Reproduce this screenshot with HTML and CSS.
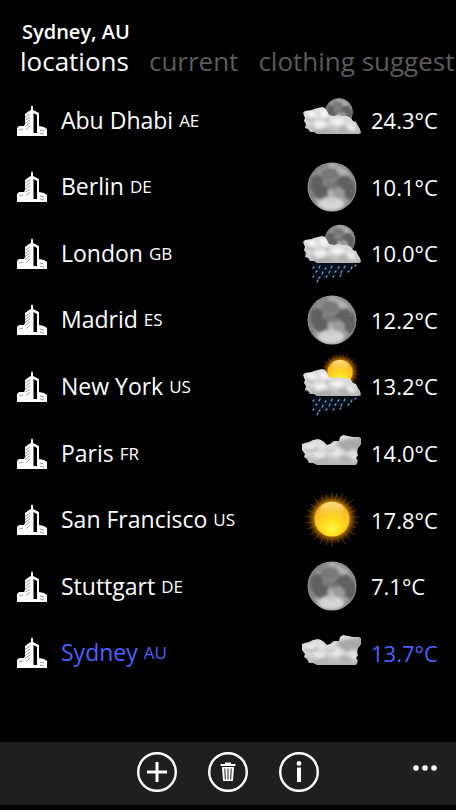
FILE: index.html
```html
<!DOCTYPE html>
<html lang="en">
<head>
<meta charset="utf-8">
<meta name="viewport" content="width=device-width, initial-scale=1">
<title>Weather locations</title>
<link rel="stylesheet" href="styles.css">
</head>
<body>
<svg class="defs" width="0" height="0" aria-hidden="true">
  <defs>
    <radialGradient id="moon-fill" cx=".52" cy=".5" r=".5">
      <stop offset="0" stop-color="#9a9a9a"/><stop offset=".8" stop-color="#9c9c9c"/><stop offset="1" stop-color="#7c7c7c"/>
    </radialGradient>
    <radialGradient id="sun-fill" cx=".5" cy=".78" r=".75">
      <stop offset="0" stop-color="#fff648"/><stop offset=".35" stop-color="#ffdc1c"/><stop offset=".75" stop-color="#f9bd28"/><stop offset="1" stop-color="#eda020"/>
    </radialGradient>
    <radialGradient id="sun-glow">
      <stop offset=".6" stop-color="#e39a10"/><stop offset=".78" stop-color="#8a5200" stop-opacity=".75"/><stop offset="1" stop-color="#402000" stop-opacity="0"/>
    </radialGradient>
    <linearGradient id="sun-shine" x1="0" y1="0" x2="0" y2="1">
      <stop offset="0" stop-color="#fff0b0" stop-opacity=".8"/><stop offset="1" stop-color="#ffd850" stop-opacity="0"/>
    </linearGradient>
    <linearGradient id="cloud-fill" x1="0" y1="0" x2="0" y2="1">
      <stop offset="0" stop-color="#dcdcdc"/><stop offset=".6" stop-color="#d8d8d8"/><stop offset="1" stop-color="#b4b4b4"/>
    </linearGradient>
    <filter id="soft" x="-30%" y="-30%" width="160%" height="160%"><feGaussianBlur stdDeviation="1.6"/></filter>
    <clipPath id="disc"><circle cx="32" cy="32" r="24.5"/></clipPath>
    <path id="cloud-shape" d="M3 21l2-2 7-1 2-1 4-1 4-1 3 1 2 3 2 4 5 1 4-1 4 1 5 0 4 2 2 3 3 1 2 4 2 3 1 4-2 1H17l-3-2-4 0-2-3-3-1 1-4-2-3 1-3z"/>
    <clipPath id="cloud-clip"><use href="#cloud-shape"/></clipPath>
    <path id="wide-shape" d="M2 23l3-1 4-1 4-2 5-1 3 1 3 2 3 3 3-1 4-3 5 0 1-4 3-2 5 1 5 1 5 0 3 1 0 6-3 4-1 4 1 3-2 3 2 3-2 4H17l-4-2-4 0-2-4-3-2 1-3-3-4z"/>
    <clipPath id="wide-clip"><use href="#wide-shape"/></clipPath>
  </defs>

  <symbol id="city" viewBox="0 0 30 31">
    <path fill="#fff" d="M0 31V23l2-2h5l1-2V9l4-3 2-1V2l1-2 1 2v3l6 3v13l5 1 3 2v7z"/>
    <path fill="#000" d="M16.500 8l3.500 2v18h-3.500z"/>
    <path stroke="#8a8a8a" stroke-width=".9" fill="none" d="M8 12.500l5-3.500M8 15.500l5-3.500M8 18.500l5-3.500M8 21.500l5-3.500M9 24.500l4-3.500M2 25l4-1M23 25l4 1M23 28l4 1"/>
  </symbol>

  <symbol id="moon" viewBox="0 0 64 64">
    <circle cx="32" cy="32" r="24.500" fill="url(#moon-fill)"/>
    <g clip-path="url(#disc)">
      <g filter="url(#soft)">
        <path fill="#4c4c4c" opacity=".75" d="M11 23l7-4 5 5 0 6 5 3 1 8-7 5-8-5-4-9zM40 22l7-2 7 7 2 11-5 8-6-4 0-6-6-5-5-3z"/>
        <path fill="#606060" opacity=".6" d="M20 16l8-4 9 3 3 7-8 4-10-2zM24 25l8 2 7-2 4 5-8 4-10-1z"/>
        <ellipse cx="31" cy="49" rx="13" ry="7" fill="#e4e4e4" opacity=".8"/>
        <path fill="#c4c4c4" opacity=".6" d="M28 35l5 2 3 9-9 1zM36 10l9 5 4 5-9-1zM14 43l6 4-2 5zM28 8l9 0 0 4-9 0z"/>
      </g>
      <path stroke="#bbb" stroke-width=".7" opacity=".35" d="M31 48l-7-8M31 48l10-7M30 46l0-9M48 29l3-2M50 35l2 2"/>
      <circle cx="32" cy="32" r="24" fill="none" stroke="#b0b0b0" opacity=".4"/>
    </g>
  </symbol>

  <symbol id="sun" viewBox="0 0 64 64">
    <circle cx="32" cy="31" r="26" fill="url(#sun-glow)"/>
    <path stroke="#a86c0a" stroke-width=".7" opacity=".65" d="M32 13V4M35 13l2-8M39 14l4-9M42 16l5-7M45 18l9-7M48 21l7-3M49 25l8-3M50 29l9 0M50 33l9 2M49 37l7 3M47 41l8 6M44 44l6 8M41 47l4 9M37 49l2 6M32 49v10M28 49l-2 8M24 47l-4 9M20 45l-6 7M17 42l-7 5M15 38l-8 3M14 34l-9 1M14 29l-9-1M15 25l-8-3M17 21l-7-5M20 18l-5-8M24 15l-3-8M28 13l-2-7"/>
    <circle cx="32" cy="31" r="17.500" fill="url(#sun-fill)"/>
    <ellipse cx="32" cy="22" rx="12" ry="8" fill="url(#sun-shine)"/>
  </symbol>

  <symbol id="cloud" viewBox="0 0 64 64">
    <use href="#cloud-shape" fill="url(#cloud-fill)"/>
    <g clip-path="url(#cloud-clip)"><g filter="url(#soft)">
      <path fill="#fff" opacity=".7" d="M5 20l8-1 5 4-6 3zM18 18l8 0 3 6-6 2zM30 29l9-3 6 4-8 4zM14 31l10-2 3 5-10 3zM48 31l6 3 1 5-8-2z"/>
      <path fill="#999" opacity=".5" d="M5 25l6 2 4-2-2 5-7-2zM24 26l6 1-3 4zM10 36l9 2 9-2 6 4-15 2zM38 36l8-2 4 5-9 1z"/>
    </g></g>
  </symbol>

  <symbol id="wide-cloud" viewBox="0 0 64 64">
    <use href="#wide-shape" fill="url(#cloud-fill)"/>
    <g clip-path="url(#wide-clip)"><g filter="url(#soft)">
      <path fill="#808080" opacity=".55" d="M36 21l12-3 15-2-2 14-9-2-5 3-8-5z"/>
      <path fill="#999" opacity=".45" d="M4 28l6 1 5-3 5 2-6 3-8 0zM24 26l5 3 7-1-5 5zM9 37l9 2 8-3 5 4-12 2zM37 36l8-2 9 6-10 2z"/>
      <path fill="#f5f5f5" opacity=".65" d="M5 25l9-3 4 3-7 3zM19 21l7 4-5 3zM29 32l8-3 6 4-7 3zM13 32l10 0 2 4-9 1zM50 33l7 1-2 6z"/>
    </g></g>
  </symbol>

  <symbol id="rain" viewBox="0 0 64 64">
    <path fill="#0a1a36" opacity=".6" filter="url(#soft)" d="M11 41h45l-3 7-10 4-14 4-13 4-3-8z"/>
    <path stroke="#86a0c4" stroke-width="1.200" stroke-linecap="round" d="M14 46l-1 1M20 45l-1 2M26 47l-1 1M32 45l-1 2M39 46l-1 1M45 45l-1 2M52 46l-1 2M56 44l-1 1M17 50l-1 1M23 51l-1 2M30 50l-1 2M36 50l-1 1M42 50l-1 2M49 50l-1 1M14 55l-1 1M20 56l-1 1M27 55l-1 1M34 55l-1 1M41 54l-1 1M18 59l-1 2"/>
  </symbol>

  <symbol id="cloudy-night" viewBox="0 0 64 64">
    <use href="#moon" x="21" y="6" width="36" height="36"/>
    <use href="#cloud" y="4" width="64" height="64"/>
  </symbol>
  <symbol id="rainy-night" viewBox="0 0 64 64">
    <use href="#moon" x="20" y="-1" width="40" height="40"/>
    <use href="#rain" width="64" height="64"/>
    <use href="#cloud" width="64" height="64"/>
  </symbol>
  <symbol id="rainy-day" viewBox="0 0 64 64">
    <use href="#sun" x="17" y="-4" width="46" height="46"/>
    <use href="#rain" width="64" height="64"/>
    <use href="#cloud" width="64" height="64"/>
  </symbol>
</svg>

<div class="app">
  <header class="header">
    <h1 class="title">Sydney, AU</h1>
    <nav class="tabs">
      <button class="tab tab-active" type="button">locations</button>
      <button class="tab" type="button">current</button>
      <button class="tab" type="button">clothing suggestions</button>
    </nav>
  </header>

  <main class="main">
    <ul class="list">
      <li class="row"><svg class="city"><use href="#city"/></svg><span class="place">Abu Dhabi <small class="code">AE</small></span><svg class="sky"><use href="#cloudy-night"/></svg><span class="temp">24.3°C</span></li>
      <li class="row"><svg class="city"><use href="#city"/></svg><span class="place">Berlin <small class="code">DE</small></span><svg class="sky"><use href="#moon"/></svg><span class="temp">10.1°C</span></li>
      <li class="row"><svg class="city"><use href="#city"/></svg><span class="place">London <small class="code">GB</small></span><svg class="sky"><use href="#rainy-night"/></svg><span class="temp">10.0°C</span></li>
      <li class="row"><svg class="city"><use href="#city"/></svg><span class="place">Madrid <small class="code">ES</small></span><svg class="sky"><use href="#moon"/></svg><span class="temp">12.2°C</span></li>
      <li class="row"><svg class="city"><use href="#city"/></svg><span class="place">New York <small class="code">US</small></span><svg class="sky"><use href="#rainy-day"/></svg><span class="temp">13.2°C</span></li>
      <li class="row"><svg class="city"><use href="#city"/></svg><span class="place">Paris <small class="code">FR</small></span><svg class="sky"><use href="#wide-cloud"/></svg><span class="temp">14.0°C</span></li>
      <li class="row"><svg class="city"><use href="#city"/></svg><span class="place">San Francisco <small class="code">US</small></span><svg class="sky"><use href="#sun"/></svg><span class="temp">17.8°C</span></li>
      <li class="row"><svg class="city"><use href="#city"/></svg><span class="place">Stuttgart <small class="code">DE</small></span><svg class="sky"><use href="#moon"/></svg><span class="temp">7.1°C</span></li>
      <li class="row row-current"><svg class="city"><use href="#city"/></svg><span class="place">Sydney <small class="code">AU</small></span><svg class="sky"><use href="#wide-cloud"/></svg><span class="temp">13.7°C</span></li>
    </ul>
  </main>

  <footer class="bar">
    <span></span>
    <div class="actions">
      <button class="action" type="button" aria-label="Add">
        <svg viewBox="0 0 40 40"><circle class="ring" cx="20" cy="20" r="18.800"/><path fill="#fff" d="M18.500 10h3v8.500H30v3h-8.500V30h-3v-8.500H10v-3h8.500z"/></svg>
      </button>
      <button class="action" type="button" aria-label="Delete">
        <svg viewBox="0 0 40 40"><circle class="ring" cx="20" cy="20" r="18.800"/><path fill="#fff" d="M12.500 12H17v-1.500h6V12h4.500v2h-15z"/><path fill="#fff" d="M14 15h12l-1 14H15z"/><path stroke="#1f1f1f" stroke-width="1" d="M16.800 16.500l.5 11M20 16.500v11M23.200 16.500l-.5 11"/></svg>
      </button>
      <button class="action" type="button" aria-label="Information">
        <svg viewBox="0 0 40 40"><circle class="ring" cx="20" cy="20" r="18.800"/><circle cx="20" cy="11.500" r="2.400" fill="#fff"/><path fill="#fff" d="M18 15.500h4V30h-4z"/></svg>
      </button>
    </div>
    <button class="more" type="button" aria-label="More">
      <svg viewBox="0 0 24 6"><circle cx="3" cy="3" r="2.800" fill="#fff"/><circle cx="12" cy="3" r="2.800" fill="#fff"/><circle cx="21" cy="3" r="2.800" fill="#fff"/></svg>
    </button>
  </footer>
</div>
</body>
</html>
```
FILE: styles.css
```css
* {
  box-sizing: border-box;
}

body {
  margin: 0;
  background: #000;
  color: #fff;
  font-family: "Open Sans", "Noto Sans", sans-serif;
}

button {
  padding: 0;
  border: 0;
  background: none;
  color: inherit;
  font: inherit;
}

svg {
  display: block;
}

.defs {
  position: absolute;
}

.app {
  display: flex;
  flex-direction: column;
  min-height: 100vh;
  padding-bottom: 5px;
}

.header {
  padding: 20px 0 9px 20px;
  overflow: hidden;
}

.title {
  margin: 0 0 0 2px;
  font-size: 20px;
  font-weight: 600;
  line-height: 24px;
}

.tabs {
  display: flex;
  gap: 20px;
  line-height: 34px;
}

.tab {
  flex: none;
  color: #5c5c5c;
  font-size: 26px;
  font-weight: 400;
  white-space: nowrap;
}

.tab-active {
  color: #fff;
}

.main {
  display: flex;
  flex: 1;
  padding-bottom: 56px;
}

.list {
  display: grid;
  flex: 1;
  grid-auto-rows: 1fr;
  margin: 0;
  padding: 0 24px 0 17px;
  list-style: none;
}

.row {
  display: grid;
  grid-template-columns: 30px 1fr 64px 68px;
  align-items: center;
  font-size: 23px;
  line-height: 32px;
}

.row-current {
  color: #4a63ff;
}

.city {
  width: 30px;
  height: 31px;
}

.place {
  padding-left: 14px;
  white-space: nowrap;
}

.code {
  font-size: 17px;
  vertical-align: 2px;
}

.sky {
  width: 64px;
  height: 64px;
}

.temp {
  padding-left: 7px;
  font-size: 22px;
  white-space: nowrap;
}

.bar {
  display: grid;
  grid-template-columns: 1fr auto 1fr;
  align-items: center;
  min-height: 63px;
  padding: 0 19px 3px;
  background: #1f1f1f;
}

.actions {
  display: flex;
  gap: 31px;
}

.action {
  width: 40px;
  height: 40px;
}

.ring {
  fill: none;
  stroke: #fff;
  stroke-width: 2.4px;
}

.more {
  justify-self: end;
  width: 24px;
  padding-bottom: 8px;
}
```
